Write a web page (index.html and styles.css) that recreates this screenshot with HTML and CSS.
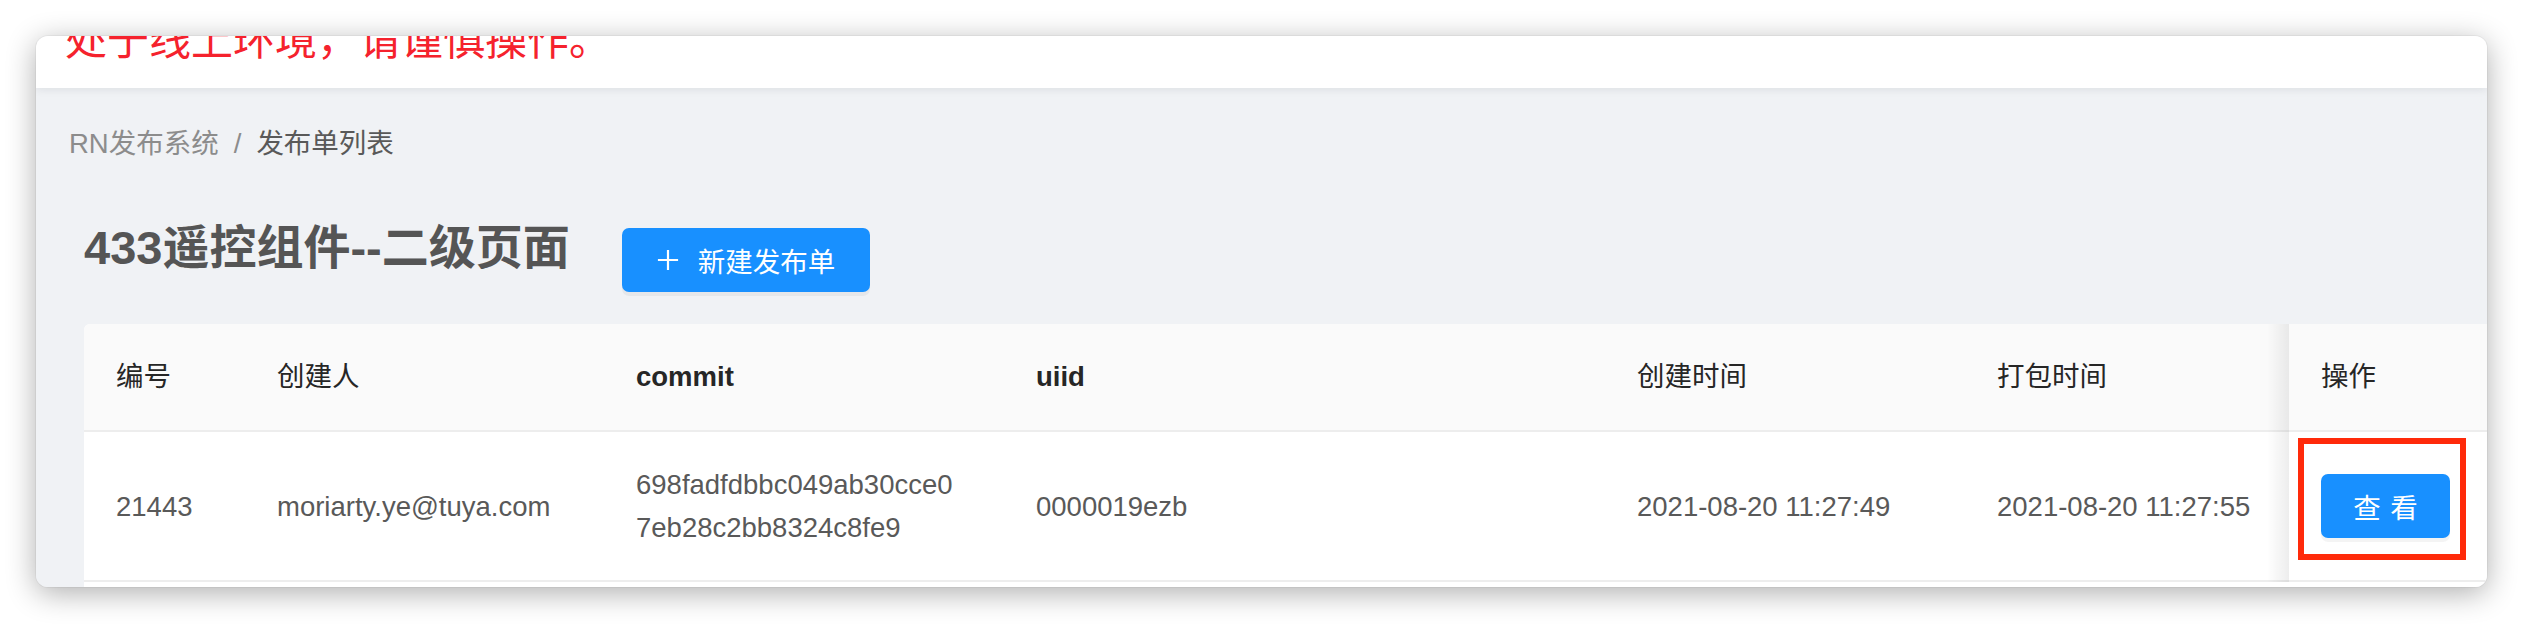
FILE: index.html
```html
<!DOCTYPE html>
<html lang="zh-CN">
<head>
<meta charset="utf-8">
<title>发布单列表</title>
<link rel="stylesheet" href="styles.css">
</head>
<body>
<div class="window">
  <header class="banner">
    <p class="banner-text">处于线上环境，请谨慎操作。</p>
  </header>
  <main class="content">
    <nav class="breadcrumb">
      <span class="crumb">RN发布系统</span>
      <span class="sep">/</span>
      <span class="crumb current">发布单列表</span>
    </nav>
    <section class="section">
      <div class="page-head">
        <h1 class="title">433遥控组件--二级页面</h1>
        <button class="btn btn-primary btn-new">
          <svg class="plus" viewBox="0 0 24 24" width="22" height="22" aria-hidden="true">
            <path d="M12 1v22M1 12h22" stroke="#fff" stroke-width="2.4" fill="none"/>
          </svg>
          <span>新建发布单</span>
        </button>
      </div>
      <div class="card">
        <table class="table">
          <colgroup>
            <col class="c-id"><col class="c-user"><col class="c-commit"><col class="c-uiid"><col class="c-ctime"><col class="c-ptime"><col class="c-op">
          </colgroup>
          <thead>
            <tr>
              <th>编号</th>
              <th>创建人</th>
              <th><span class="latin-strong">commit</span></th>
              <th><span class="latin-strong">uiid</span></th>
              <th>创建时间</th>
              <th>打包时间</th>
              <th class="fixed">操作</th>
            </tr>
          </thead>
          <tbody>
            <tr>
              <td>21443</td>
              <td>moriarty.ye@tuya.com</td>
              <td class="hash">698fadfdbbc049ab30cce07eb28c2bb8324c8fe9</td>
              <td>0000019ezb</td>
              <td>2021-08-20 11:27:49</td>
              <td>2021-08-20 11:27:55</td>
              <td class="fixed">
                <button class="btn btn-primary btn-view">查看</button>
                <span class="mark"></span>
              </td>
            </tr>
          </tbody>
        </table>
      </div>
    </section>
  </main>
</div>
</body>
</html>
```

FILE: styles.css
```css
* { box-sizing: border-box; }

html, body {
  margin: 0;
  padding: 0;
  background: #ffffff;
  height: 624px;
  overflow: hidden;
}

body {
  font-family: "Liberation Sans", "Noto Sans CJK SC", sans-serif;
  font-size: 27.5px;
  color: #595959;
}

.window {
  margin: 36px 37px 0 36px;
  height: 551px;
  border-radius: 12px;
  overflow: hidden;
  display: flex;
  flex-direction: column;
  background: #f0f2f5;
  box-shadow: 0 0 0 1px rgba(0, 0, 0, 0.04), 0 6px 30px rgba(0, 0, 0, 0.32);
}

.banner {
  height: 52px;
  flex: none;
  background: #ffffff;
  overflow: hidden;
  padding-left: 29px;
  position: relative;
  z-index: 1;
  box-shadow: 0 2px 8px rgba(0, 21, 41, 0.08);
}

.banner-text {
  margin: -16px 0 0 0;
  font-size: 42px;
  line-height: 42px;
  color: #f5222d;
  white-space: nowrap;
}

.content {
  flex: 1;
  overflow: hidden;
  background: #f0f2f5;
}

.breadcrumb {
  padding: 34px 0 0 33px;
  line-height: 43px;
  display: flex;
  color: #8c8c8c;
}

.sep {
  margin: 0 15px;
  color: #8c8c8c;
}

.crumb.current {
  color: #595959;
}

.section {
  margin-top: 51px;
  padding-left: 48px;
}

.page-head {
  display: flex;
  align-items: flex-start;
  gap: 52px;
  height: 76px;
  margin-bottom: 32px;
}

.title {
  margin: 0;
  font-size: 47px;
  line-height: 64px;
  font-weight: 700;
  color: #555555;
  white-space: nowrap;
}

.btn {
  font-family: inherit;
  font-size: 27.5px;
  border: none;
  border-radius: 7px;
  cursor: pointer;
}

.btn-primary {
  background: #1890ff;
  color: #ffffff;
  box-shadow: 0 4px 0 rgba(0, 0, 0, 0.045);
}

.btn-new {
  margin-top: 12px;
  height: 64px;
  width: 248px;
  padding: 0 29px 0 35px;
  display: flex;
  align-items: center;
  gap: 19px;
}

.plus {
  flex: none;
}

.card {
  background: #ffffff;
  border-radius: 6px 0 0 0;
  overflow: hidden;
  padding-bottom: 40px;
}

.table {
  width: 100%;
  border-collapse: separate;
  border-spacing: 0;
  table-layout: fixed;
}

.c-id { width: 161px; }
.c-user { width: 359px; }
.c-commit { width: 400px; }
.c-uiid { width: 601px; }
.c-ctime { width: 360px; }
.c-ptime { width: 324px; }
.c-op { width: 198px; }

.table th,
.table td {
  text-align: left;
  padding: 31px 32px;
  line-height: 43px;
  border-bottom: 2px solid #ededed;
  vertical-align: middle;
}

.table th {
  background: #fafafa;
  color: #262626;
  font-weight: 400;
  padding-bottom: 32px;
}

.latin-strong {
  font-weight: 700;
}

.table td {
  color: #595959;
}

.table td.hash {
  word-break: break-all;
  padding-right: 44px;
}

.fixed {
  position: relative;
}

.fixed::before {
  content: "";
  position: absolute;
  top: 0;
  bottom: -2px;
  left: -22px;
  width: 22px;
  background: linear-gradient(to left, rgba(0, 0, 0, 0.07), rgba(0, 0, 0, 0));
}

.btn-view {
  width: 129px;
  height: 64px;
  padding: 0 0 0 0.34em;
  letter-spacing: 0.34em;
  display: block;
}

.mark {
  position: absolute;
  left: 9px;
  top: 6px;
  width: 168px;
  height: 122px;
  border: 6px solid #ff2a0a;
}
```
